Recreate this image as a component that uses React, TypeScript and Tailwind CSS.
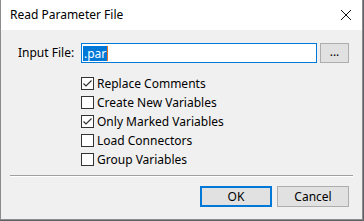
import React from "react";

const font = { fontFamily: '"Segoe UI", "Noto Sans", "Open Sans", sans-serif' };

const Check = ({ checked, label }: { checked?: boolean; label: string }) => (
  <div className="flex items-center h-[19px]">
    <div className="w-[13px] h-[13px] border border-[#333333] bg-white flex items-center justify-center">
      {checked && (
        <svg width="11" height="11" viewBox="0 0 11 11">
          <path d="M1.5 5.5 L4 8 L9.5 2.5" fill="none" stroke="#333333" strokeWidth="1.2" />
        </svg>
      )}
    </div>
    <span className="ml-[3px] text-[12px] text-black leading-none">{label}</span>
  </div>
);

export default function App() {
  return (
    <div className="w-[364px] h-[221px] bg-[#5f6166] overflow-hidden" style={font}>
      <div className="w-[363px] h-[220px] border border-[#8c8c8c] border-t-0 bg-[#f0f0f0] flex flex-col">
        <div className="h-[30px] bg-white flex items-center justify-between pl-[9px] pr-[10px]">
          <span className="text-[12px] text-black">Read Parameter File</span>
          <svg width="12" height="12" viewBox="0 0 12 12">
            <path d="M1 1 L11 11 M11 1 L1 11" stroke="#111" strokeWidth="1" />
          </svg>
        </div>
        <div className="flex items-center mt-[13px] pl-[17px]">
          <span className="w-[63px] text-[12px] text-black">Input File:</span>
          <div className="w-[236px] h-[20px] border border-[#0078d7] bg-white flex items-center pl-[1px]">
            <span className="bg-[#0078d7] text-white text-[12px] leading-[15px] px-[1px]">.par</span>
            <span className="w-px h-[15px] bg-[#e0702a]" />
          </div>
          <button className="ml-[3px] w-[29px] h-[20px] bg-[#e1e1e1] border border-[#adadad] text-[12px] leading-none flex items-center justify-center pb-[2px]">
            ...
          </button>
        </div>
        <div className="flex flex-col pl-[80px] mt-[11px]">
          <Check checked label="Replace Comments" />
          <Check label="Create New Variables" />
          <Check checked label="Only Marked Variables" />
          <Check label="Load Connectors" />
          <Check label="Group Variables" />
        </div>
        <div className="mx-[9px] mt-[6px] h-px bg-[#a0a0a0] border-b border-white box-content" />
        <div className="flex justify-end gap-[5px] pr-[13px] mt-[9px]">
          <button className="w-[72px] h-[21px] bg-[#e1e1e1] border-2 border-[#0078d7] text-[12px] text-black">OK</button>
          <button className="w-[72px] h-[21px] bg-[#e1e1e1] border border-[#adadad] text-[12px] text-black">Cancel</button>
        </div>
      </div>
    </div>
  );
}
